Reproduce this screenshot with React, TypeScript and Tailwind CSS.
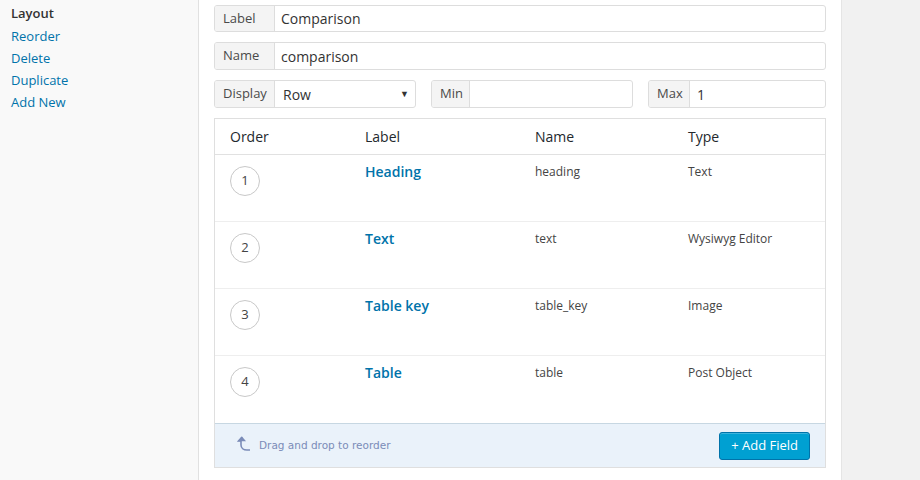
import { ReactNode } from 'react';

const fields = [
  { order: 1, label: 'Heading', name: 'heading', type: 'Text' },
  { order: 2, label: 'Text', name: 'text', type: 'Wysiwyg Editor' },
  { order: 3, label: 'Table key', name: 'table_key', type: 'Image' },
  { order: 4, label: 'Table', name: 'table', type: 'Post Object' },
];

function Prepend({ children, className = '' }: { children: ReactNode; className?: string }) {
  return (
    <div className={`flex items-center pl-[8px] bg-[#f4f4f4] border-r border-[#dddddd] text-[13px] text-[#4a4a4a] ${className}`}>
      {children}
    </div>
  );
}

export default function App() {
  return (
    <div className="flex w-[920px] h-[480px] overflow-hidden bg-white text-[#444] font-['Open_Sans',sans-serif]">
      {/* sidebar */}
      <aside className="w-[199px] shrink-0 bg-[#f9f9f9] border-r border-[#e1e1e1] pl-[11px] pt-[2px] text-[13px] leading-[22px]">
        <div className="font-semibold text-[#333]">Layout</div>
        <div className="mt-[1px] text-[#0073aa]">Reorder</div>
        <div className="text-[#0073aa]">Delete</div>
        <div className="text-[#0073aa]">Duplicate</div>
        <div className="text-[#0073aa]">Add New</div>
      </aside>

      {/* main */}
      <main className="w-[642px] shrink-0 pl-[15px] pr-[15px] pt-[5px]">
        <div className="flex h-[27px] border border-[#dddddd] rounded-[3px] overflow-hidden">
          <Prepend className="w-[60px]">Label</Prepend>
          <div className="flex-1 flex items-center pl-[6px] text-[14px] text-[#333]">Comparison</div>
        </div>
        <div className="flex h-[28px] mt-[10px] border border-[#dddddd] rounded-[3px] overflow-hidden">
          <Prepend className="w-[60px]">Name</Prepend>
          <div className="flex-1 flex items-center pl-[6px] pt-[1px] text-[14px] text-[#333]">comparison</div>
        </div>
        <div className="flex mt-[10px] h-[28px]">
          <div className="flex w-[202px] border border-[#dddddd] rounded-[3px] overflow-hidden">
            <Prepend className="w-[60px]">Display</Prepend>
            <div className="flex-1 flex items-center justify-between pl-[8px] pr-[6px] text-[14px] text-[#333]">
              <span>Row</span>
              <span className="text-[9px] text-[#333]">▼</span>
            </div>
          </div>
          <div className="flex w-[202px] ml-[15px] border border-[#dddddd] rounded-[3px] overflow-hidden">
            <Prepend className="w-[38px]">Min</Prepend>
            <div className="flex-1" />
          </div>
          <div className="flex flex-1 ml-[15px] border border-[#dddddd] rounded-[3px] overflow-hidden">
            <Prepend className="w-[41px]">Max</Prepend>
            <div className="flex-1 flex items-center pl-[7px] text-[14px] text-[#333]">1</div>
          </div>
        </div>

        {/* fields table */}
        <div className="mt-[10px] border border-[#dfdfdf]">
          <div className="flex h-[36px] items-center border-b border-[#e1e1e1] text-[14px] text-[#23282d]">
            <div className="w-[135px] pl-[15px]">Order</div>
            <div className="w-[170px] pl-[15px]">Label</div>
            <div className="w-[153px] pl-[15px]">Name</div>
            <div className="flex-1 pl-[15px]">Type</div>
          </div>
          {fields.map((f, i) => (
            <div
              key={f.order}
              className={`flex h-[67px] ${i < fields.length - 1 ? 'border-b border-[#eeeeee]' : ''}`}
            >
              <div className="w-[135px] pl-[15px] pt-[11px]">
                <div className="w-[30px] h-[30px] rounded-full border border-[#c8c8c8] flex items-center justify-center text-[13px] text-[#444]">
                  {f.order}
                </div>
              </div>
              <div className="w-[170px] pl-[15px] pt-[6px] text-[14px] font-semibold text-[#0073aa]">{f.label}</div>
              <div className="w-[153px] pl-[15px] pt-[8px] text-[12px] text-[#444]">{f.name}</div>
              <div className="flex-1 pl-[15px] pt-[8px] text-[12px] text-[#444]">{f.type}</div>
            </div>
          ))}
          <div className="flex items-center justify-between h-[44px] bg-[#eaf2fa] border-t border-[#c7d7e2] pl-[22px] pr-[15px]">
            <div className="flex items-center gap-[6px] text-[10.5px] text-[#7b8cb8] font-['DejaVu_Sans',sans-serif]">
              <svg width="16" height="16" viewBox="0 0 16 16" className="-mt-[6px]">
                <path d="M5 2 L1.5 6 H4 V10 C4 13 6.5 15 10 15 H13" fill="none" stroke="#7b8cb8" strokeWidth="1.6" />
                <path d="M5 1.5 L1 6.2 H9 Z" fill="#7b8cb8" />
              </svg>
              <span>Drag and drop to reorder</span>
            </div>
            <button className="h-[28px] px-[11px] bg-[#00a0d2] border border-[#0073aa] rounded-[3px] text-white text-[13px] shadow-[inset_0_1px_0_rgba(120,200,230,0.5)]">
              + Add Field
            </button>
          </div>
        </div>
      </main>

      <div className="flex-1 bg-[#f1f1f1] border-l border-[#e5e5e5]" />
    </div>
  );
}
